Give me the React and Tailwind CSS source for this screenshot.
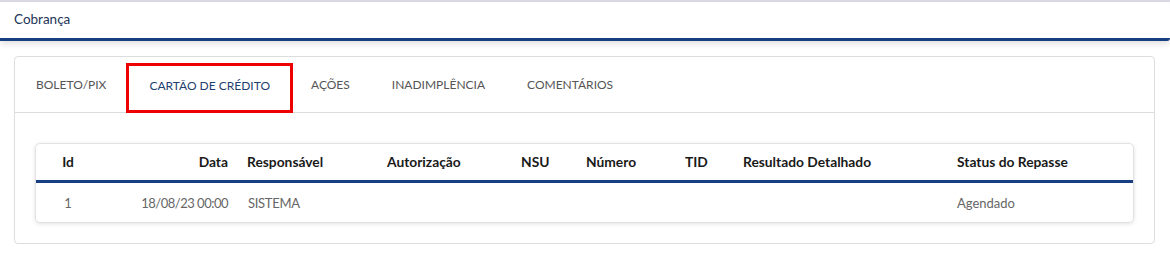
import React from 'react'

const tabs = ['BOLETO/PIX', 'CARTÃO DE CRÉDITO', 'AÇÕES', 'INADIMPLÊNCIA', 'COMENTÁRIOS']

const cols = 'grid grid-cols-[64px_138px_140px_134px_65px_99px_58px_214px_1fr]'

export default function App() {
  return (
    <div
      className="h-[259px] w-[1170px] bg-white text-[13px]"
      style={{ fontFamily: 'Lato, "Liberation Sans", sans-serif' }}
    >
      <div className="border-t-2 border-[#dcdae4]">
        <header className="flex h-[39px] items-center rounded-r-[3px] border-b-[3px] border-[#173f7f] bg-white px-[14px] pb-[1px] text-[13.5px] text-[#1d3557] shadow-[0_3px_6px_rgba(0,0,0,0.12)]">
          Cobrança
        </header>
      </div>

      <div className="px-[14px] pt-[15px]">
        <div className="mr-[1px] rounded-[4px] border border-[#dddddd] bg-white">
          <nav className="flex h-[56px] items-center border-b border-[#dddddd] text-[12px]">
            {tabs.map((t, i) => (
              <div
                key={t}
                className={
                  i === 1
                    ? '-ml-[1px] -mr-[3px] mt-[7px] flex h-[50px] items-center border-[3px] border-[#ee0000] px-[20px] pb-[5px] text-[#1f3f70]'
                    : 'px-[21px] text-[#555555]'
                }
              >
                {t}
              </div>
            ))}
          </nav>

          <div className="px-[20px] pb-[20px] pt-[30px]">
            <div className="overflow-hidden rounded-[5px] border border-[#e2e2e2] shadow-[0_1px_4px_rgba(0,0,0,0.12)]">
              <div className={`${cols} h-[39px] items-center border-b-[3px] border-[#173f7f] pt-[1px] text-[13.8px] font-bold text-[#1a1a1a]`}>
                <div className="text-center">Id</div>
                <div className="pr-[10px] text-right">Data</div>
                <div className="pl-[9px]">Responsável</div>
                <div className="pl-[9px]">Autorização</div>
                <div className="pl-[9px]">NSU</div>
                <div className="pl-[9px]">Número</div>
                <div className="pl-[9px]">TID</div>
                <div className="pl-[9px] whitespace-nowrap">Resultado Detalhado</div>
                <div className="pl-[9px]">Status do Repasse</div>
              </div>
              <div className={`${cols} h-[39px] items-center pt-[3px] text-[#666666]`}>
                <div className="text-center">1</div>
                <div className="pr-[10px] text-right tracking-[-0.5px]">18/08/23 00:00</div>
                <div className="pl-[10px] tracking-[-0.3px]">SISTEMA</div>
                <div />
                <div />
                <div />
                <div />
                <div />
                <div className="pl-[9px]">Agendado</div>
              </div>
            </div>
          </div>
        </div>
      </div>
    </div>
  )
}
